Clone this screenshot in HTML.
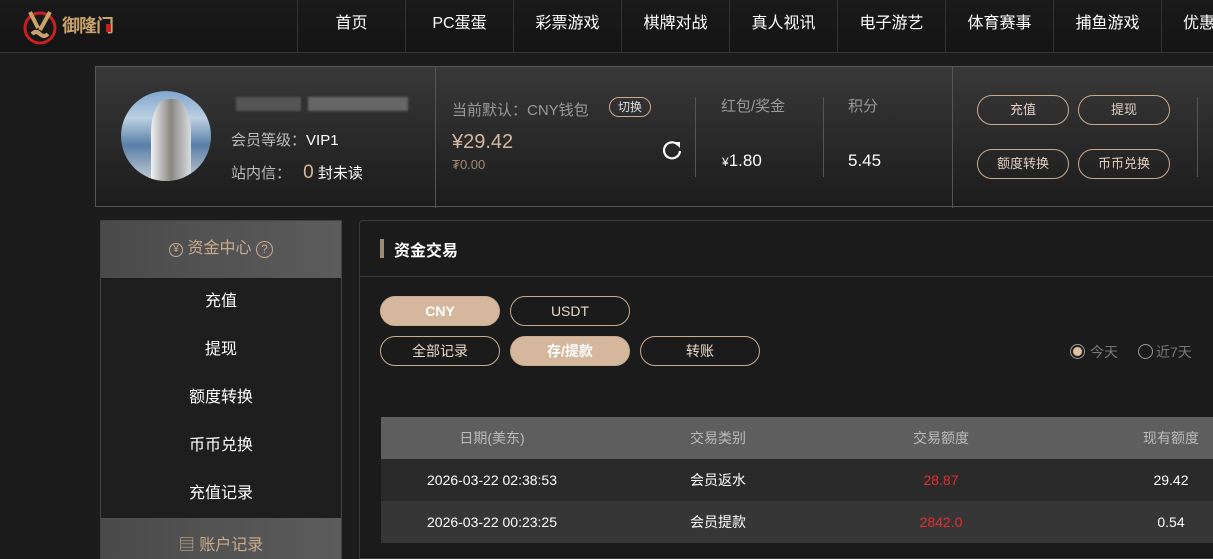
<!DOCTYPE html>
<html><head><meta charset="utf-8"><style>
*{margin:0;padding:0;box-sizing:border-box}
html,body{width:1213px;height:559px;overflow:hidden}
body{background:#1c1c1c;font-family:"Liberation Sans","Noto Sans CJK SC",sans-serif;color:#fff;position:relative}
.abs{position:absolute}
.nav{left:0;top:0;width:1213px;height:53px;background:linear-gradient(#1a1a1a,#141414);border-bottom:1px solid #333}
.nav .it{position:absolute;top:0;height:53px;width:108px;border-left:1px solid #333;text-align:center;line-height:47px;font-size:16px;color:#fff}
.card{left:95px;top:66px;width:1130px;height:141px;border:1px solid #555;background:linear-gradient(#383838,#1c1c1c)}
.btn{position:absolute;width:92px;height:30px;border:1px solid #c9ab8e;border-radius:15px;text-align:center;line-height:28px;font-size:13px;color:#e0d0c0}
.side{left:100px;top:220px;width:242px;height:339px;background:#1e1e1e;border:1px solid #444;border-bottom:none;overflow:hidden}
.side .hd{height:57px;background:linear-gradient(90deg,#4a4a4a,#5c5c5c);text-align:center;line-height:56px;color:#c9ab8e;font-size:16px}
.side .i{height:48px;text-align:center;line-height:48px;font-size:16px}
.main{left:359px;top:220px;width:860px;height:339px;background:#1b1b1b;border:1px solid #3a3a3a;border-radius:4px 0 0 0}
.pill{position:absolute;width:120px;height:30px;border-radius:15px;border:1px solid #c9ab8e;text-align:center;line-height:28px;font-size:14px;color:#e8d8c8}
.pill.on{background:#d4b79c;color:#fff;font-weight:bold}
.row{position:absolute;left:21px;width:840px;height:42px;font-size:14px;line-height:42px}
.row span{position:absolute;text-align:center}
</style></head><body>
<div class="abs nav">
 <svg class="abs" style="left:20px;top:6px" width="40" height="40" viewBox="0 0 40 40"><circle cx="20" cy="22" r="15" fill="none" stroke="#c62020" stroke-width="3"/><path d="M10 6 L18 22 M30 6 L20 24 M12 28 q4-4 8 0 q4 4 8 0" stroke="#c9a36a" stroke-width="4" fill="none"/></svg>
 <div class="abs" style="left:62px;top:12px;font-size:18px;font-weight:bold;color:#c9a36a;letter-spacing:-1px">御隆门</div>
 <div class="abs" style="left:106px;top:24px;width:5px;height:8px;background:#c62020"></div>
 <div class="it" style="left:297px">首页</div><div class="it" style="left:405px">PC蛋蛋</div><div class="it" style="left:513px">彩票游戏</div><div class="it" style="left:621px">棋牌对战</div><div class="it" style="left:729px">真人视讯</div><div class="it" style="left:837px">电子游艺</div><div class="it" style="left:945px">体育赛事</div><div class="it" style="left:1053px">捕鱼游戏</div><div class="it" style="left:1161px;text-align:left;padding-left:21px">优惠</div>
</div>
<div class="abs card">
 <div class="abs" style="left:25px;top:24px;width:90px;height:90px;border-radius:50%;overflow:hidden;background:linear-gradient(180deg,#7fa6cf 0%,#bcd0e2 30%,#5a7fa8 60%,#c6ccd2 100%)">
  <div class="abs" style="left:30px;top:8px;width:40px;height:85px;background:linear-gradient(90deg,#eef2f5,#8a8780 50%,#d8dde2);border-radius:40% 40% 0 0"></div>
 </div>
 <div class="abs" style="left:140px;top:30px;width:65px;height:14px;background:#555;filter:blur(1px)"></div>
 <div class="abs" style="left:212px;top:30px;width:100px;height:14px;background:#666;filter:blur(1px)"></div>
 <div class="abs" style="left:135px;top:62px;font-size:15px;color:#bbb">会员等级：<span style="color:#fff">VIP1</span></div>
 <div class="abs" style="left:135px;top:95px;font-size:15px;color:#bbb">站内信： <span style="color:#d4b79c;font-size:19px;margin-left:8px">0</span> <span style="color:#fff">封未读</span></div>
 <div class="abs" style="left:339px;top:0;width:1px;height:141px;background:#555"></div>
 <div class="abs" style="left:356px;top:32px;font-size:15px;color:#999">当前默认：CNY钱包</div>
 <div class="abs" style="left:513px;top:30px;width:42px;height:20px;border:1px solid #c9ab8e;border-radius:10px;font-size:12px;color:#ddd;text-align:center;line-height:18px">切换</div>
 <div class="abs" style="left:356px;top:64px;font-size:20px;color:#d4b79c">¥29.42</div>
 <div class="abs" style="left:356px;top:90px;font-size:13px;color:#a08a74">₮0.00</div>
 <svg class="abs" style="left:565px;top:72px" width="22" height="22" viewBox="0 0 22 22"><path d="M17 6 A8 8 0 1 0 19 12" fill="none" stroke="#fff" stroke-width="2.2"/><path d="M13 3 L19 3 L19 9 Z" fill="#fff"/></svg>
 <div class="abs" style="left:599px;top:30px;width:1px;height:80px;background:#555"></div>
 <div class="abs" style="left:625px;top:28px;font-size:15px;color:#999">红包/奖金</div>
 <div class="abs" style="left:626px;top:84px;font-size:17px;color:#fff"><span style="font-size:12px">¥</span>1.80</div>
 <div class="abs" style="left:727px;top:30px;width:1px;height:80px;background:#555"></div>
 <div class="abs" style="left:752px;top:28px;font-size:15px;color:#999">积分</div>
 <div class="abs" style="left:752px;top:84px;font-size:17px;color:#fff">5.45</div>
 <div class="abs" style="left:856px;top:0;width:1px;height:141px;background:#555"></div>
 <div class="btn" style="left:881px;top:28px">充值</div><div class="btn" style="left:982px;top:28px">提现</div>
 <div class="btn" style="left:881px;top:82px">额度转换</div><div class="btn" style="left:982px;top:82px">币币兑换</div>
 <div class="abs" style="left:1101px;top:30px;width:1px;height:80px;background:#555"></div>
</div>
<div class="abs side">
 <div class="hd"><span style="display:inline-block;width:14px;height:14px;border:1px solid #c9ab8e;border-radius:50%;font-size:10px;line-height:12px;vertical-align:1px">¥</span> 资金中心 <span style="display:inline-block;width:17px;height:17px;border:1px solid #c9ab8e;border-radius:50%;font-size:12px;line-height:15px">?</span></div>
 <div class="i">充值</div><div class="i">提现</div><div class="i">额度转换</div><div class="i">币币兑换</div><div class="i">充值记录</div>
 <div class="hd">▤ 账户记录</div>
</div>
<div class="abs main">
 <div class="abs" style="left:20px;top:18px;width:4px;height:19px;background:#a08a74"></div>
 <div class="abs" style="left:34px;top:16px;font-size:16px;font-weight:bold">资金交易</div>
 <div class="abs" style="left:0;top:55px;width:860px;height:1px;background:#3a3a3a"></div>
 <div class="pill on" style="left:20px;top:75px">CNY</div><div class="pill" style="left:150px;top:75px">USDT</div>
 <div class="pill" style="left:20px;top:115px">全部记录</div><div class="pill on" style="left:150px;top:115px">存/提款</div><div class="pill" style="left:280px;top:115px">转账</div>
 <div class="abs" style="left:710px;top:123px;width:15px;height:15px;border-radius:50%;border:1px solid #999;background:radial-gradient(#e0c0a0 0 4px,transparent 5px)"></div>
 <div class="abs" style="left:730px;top:121px;font-size:14px;color:#777">今天</div>
 <div class="abs" style="left:778px;top:123px;width:15px;height:15px;border-radius:50%;border:1px solid #999"></div>
 <div class="abs" style="left:796px;top:121px;font-size:14px;color:#777">近7天</div>
 <div class="row" style="top:196px;background:#5e5e5e;color:#bbb"><span style="left:0;width:222px">日期(美东)</span><span style="left:267px;width:140px">交易类别</span><span style="left:490px;width:140px">交易额度</span><span style="left:720px;width:140px">现有额度</span></div>
 <div class="row" style="top:238px;background:#2a2a2a"><span style="left:0;width:222px">2026-03-22 02:38:53</span><span style="left:267px;width:140px">会员返水</span><span style="left:490px;width:140px;color:#e03030">28.87</span><span style="left:720px;width:140px">29.42</span></div>
 <div class="row" style="top:280px;background:#363636"><span style="left:0;width:222px">2026-03-22 00:23:25</span><span style="left:267px;width:140px">会员提款</span><span style="left:490px;width:140px;color:#e03030">2842.0</span><span style="left:720px;width:140px">0.54</span></div>
</div>
</body></html>
